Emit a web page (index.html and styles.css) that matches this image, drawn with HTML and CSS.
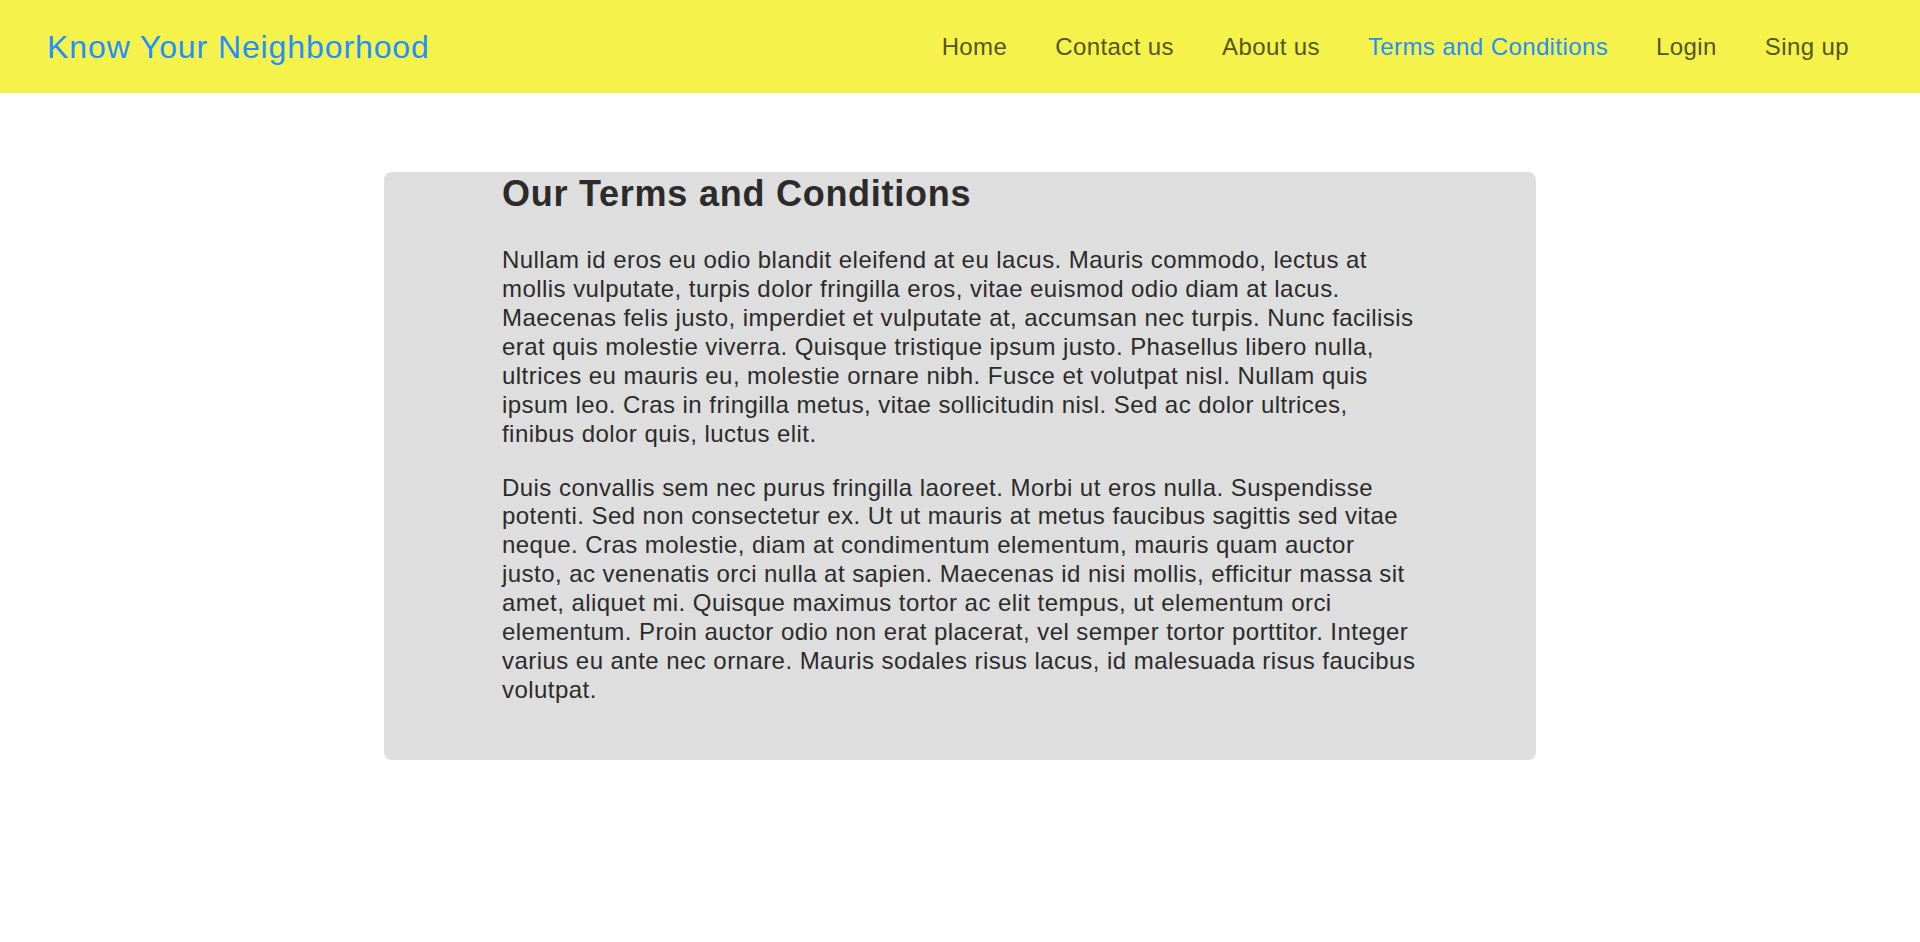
FILE: index.html
```html
<!DOCTYPE html>
<html lang="en">
<head>
<meta charset="utf-8">
<title>Know Your Neighborhood - Terms and Conditions</title>
<link rel="stylesheet" href="styles.css">
</head>
<body>
<header class="topbar">
  <a class="brand" href="#">Know Your Neighborhood</a>
  <nav class="nav">
    <a class="nav-link" href="#">Home</a>
    <a class="nav-link" href="#">Contact us</a>
    <a class="nav-link" href="#">About us</a>
    <a class="nav-link active" href="#">Terms and Conditions</a>
    <a class="nav-link" href="#">Login</a>
    <a class="nav-link" href="#">Sing up</a>
  </nav>
</header>
<main class="main">
  <section class="card">
    <h1 class="card-title">Our Terms and Conditions</h1>
    <p class="card-text">Nullam id eros eu odio blandit eleifend at eu lacus. Mauris commodo, lectus at mollis vulputate, turpis dolor fringilla eros, vitae euismod odio diam at lacus. Maecenas felis justo, imperdiet et vulputate at, accumsan nec turpis. Nunc facilisis erat quis molestie viverra. Quisque tristique ipsum justo. Phasellus libero nulla, ultrices eu mauris eu, molestie ornare nibh. Fusce et volutpat nisl. Nullam quis ipsum leo. Cras in fringilla metus, vitae sollicitudin nisl. Sed ac dolor ultrices, finibus dolor quis, luctus elit.</p>
    <p class="card-text">Duis convallis sem nec purus fringilla laoreet. Morbi ut eros nulla. Suspendisse potenti. Sed non consectetur ex. Ut ut mauris at metus faucibus sagittis sed vitae neque. Cras molestie, diam at condimentum elementum, mauris quam auctor justo, ac venenatis orci nulla at sapien. Maecenas id nisi mollis, efficitur massa sit amet, aliquet mi. Quisque maximus tortor ac elit tempus, ut elementum orci elementum. Proin auctor odio non erat placerat, vel semper tortor porttitor. Integer varius eu ante nec ornare. Mauris sodales risus lacus, id malesuada risus faucibus volutpat.</p>
  </section>
</main>
</body>
</html>
```

FILE: styles.css
```css
html, body {
  margin: 0;
  padding: 0;
  background: #ffffff;
  font-family: "Liberation Sans", Arial, sans-serif;
}

.topbar {
  display: flex;
  justify-content: space-between;
  align-items: center;
  height: 93px;
  padding: 1px 47px 0;
  box-sizing: border-box;
  background: #f5f34b;
}

.brand {
  color: #1e90ff;
  font-size: 32px;
  letter-spacing: 0.9px;
  text-decoration: none;
  line-height: 1.2;
}

.nav {
  display: flex;
  align-items: center;
}

.nav-link {
  padding: 0 24px;
  font-size: 24px;
  letter-spacing: 0.4px;
  line-height: 1.2;
  color: #56551f;
  text-decoration: none;
}

.nav-link.active {
  color: #1e90ff;
}

.main {
  padding-top: 79px;
}

.card {
  width: 60%;
  margin: 0 auto;
  box-sizing: border-box;
  padding: 0 118px 30px;
  background: #dedede;
  border-radius: 8px;
  color: #2b2b2b;
  overflow: hidden;
}

.card-title {
  margin: 0 0 31px;
  font-size: 36px;
  font-weight: bold;
  letter-spacing: 0.75px;
  line-height: 1.2;
}

.card-text {
  margin: 25px 0;
  font-size: 24px;
  letter-spacing: 0.45px;
  line-height: 28.9px;
}
```
